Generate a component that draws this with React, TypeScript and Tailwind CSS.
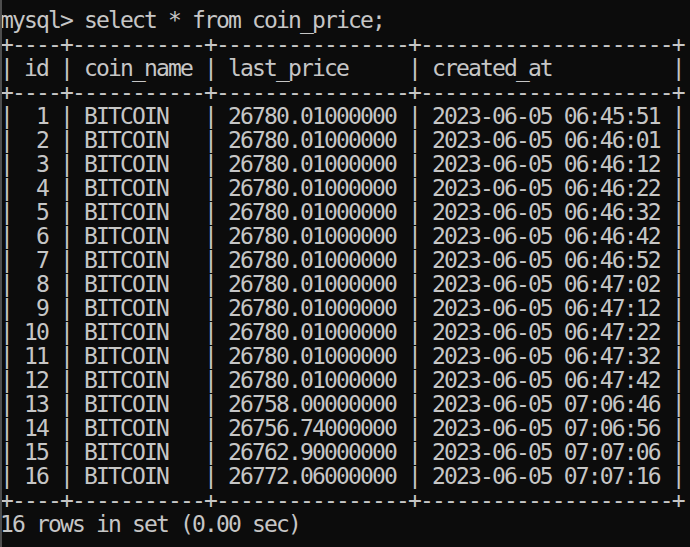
const rows: [number, string, string][] = [
  [1, "26780.01000000", "06:45:51"],
  [2, "26780.01000000", "06:46:01"],
  [3, "26780.01000000", "06:46:12"],
  [4, "26780.01000000", "06:46:22"],
  [5, "26780.01000000", "06:46:32"],
  [6, "26780.01000000", "06:46:42"],
  [7, "26780.01000000", "06:46:52"],
  [8, "26780.01000000", "06:47:02"],
  [9, "26780.01000000", "06:47:12"],
  [10, "26780.01000000", "06:47:22"],
  [11, "26780.01000000", "06:47:32"],
  [12, "26780.01000000", "06:47:42"],
  [13, "26758.00000000", "07:06:46"],
  [14, "26756.74000000", "07:06:56"],
  [15, "26762.90000000", "07:07:06"],
  [16, "26772.06000000", "07:07:16"],
];

const border = "+----+-----------+----------------+---------------------+";

const lines = [
  "mysql> select * from coin_price;",
  border,
  "| id | coin_name | last_price     | created_at          |",
  border,
  ...rows.map(
    ([id, price, time]) =>
      `| ${String(id).padStart(2)} | BITCOIN   | ${price} | 2023-06-05 ${time} |`
  ),
  border,
  "16 rows in set (0.00 sec)",
];

const App = () => {
  return (
    <div className="min-h-screen w-full bg-[#0c0c0c] border-l-2 border-[#4e4e4e] overflow-hidden">
      <pre className="-ml-[2px] pt-2 font-['DejaVu_Sans_Mono',monospace] text-[23px] tracking-[-1.85px] leading-[24px] text-[#c6c6c6] whitespace-pre">
        {lines.map((line, i) => (
          <div key={i} className="h-[24px]">
            {line}
          </div>
        ))}
      </pre>
    </div>
  );
};

export default App;
